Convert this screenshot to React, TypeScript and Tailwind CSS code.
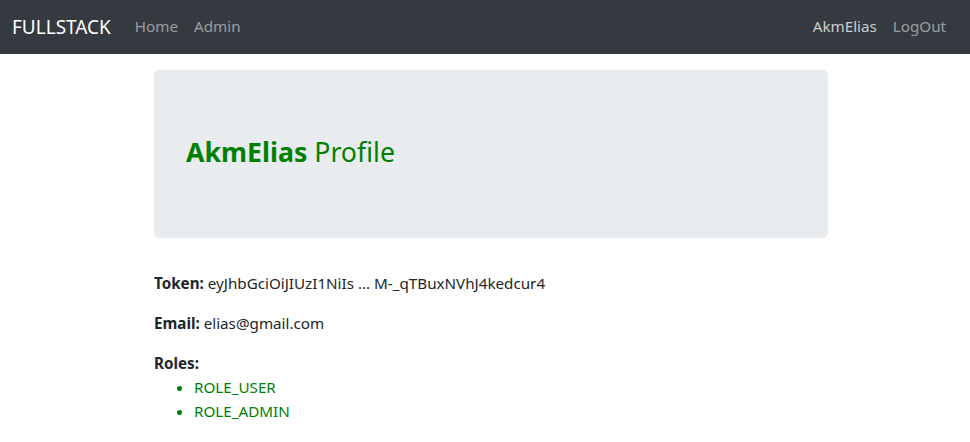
import React from "react";

export default function App() {
  return (
    <div className="min-h-[442px] bg-white text-[#212529]" style={{ fontFamily: '"Noto Sans", "Open Sans", sans-serif' }}>
      <nav className="flex h-[54px] items-center bg-[#343a40] pb-[1px] pl-[12px] pr-4">
        <span className="mr-4 text-[19px] leading-[30px] text-white">FULLSTACK</span>
        <div className="flex">
          <span className="px-2 text-[15.2px] text-white/50">Home</span>
          <span className="px-2 text-[15.2px] text-white/50">Admin</span>
        </div>
        <div className="ml-auto flex">
          <span className="px-2 text-[15.2px] text-white/75">AkmElias</span>
          <span className="px-2 text-[15.2px] text-white/50">LogOut</span>
        </div>
      </nav>
      <div className="pl-[154px] pt-4">
        <div className="w-[674px]">
          <div className="flex h-[168px] items-center rounded-[5px] bg-[#e9ecef] px-8 pb-[4px]">
            <h3 className="text-[26.7px] leading-[1.2] text-[#008000]">
              <strong className="font-bold">AkmElias</strong> Profile
            </h3>
          </div>
          <div className="mt-[33px] text-[15.2px] leading-6">
            <p className="mb-4">
              <strong className="font-bold">Token:</strong> eyJhbGciOiJIUzI1NiIs ... M-_qTBuxNVhJ4kedcur4
            </p>
            <p className="mb-4">
              <strong className="font-bold">Email:</strong> elias@gmail.com
            </p>
            <strong className="block font-bold">Roles:</strong>
            <ul className="list-disc pl-10 text-[#008000]">
              <li>ROLE_USER</li>
              <li>ROLE_ADMIN</li>
            </ul>
          </div>
        </div>
      </div>
    </div>
  );
}
